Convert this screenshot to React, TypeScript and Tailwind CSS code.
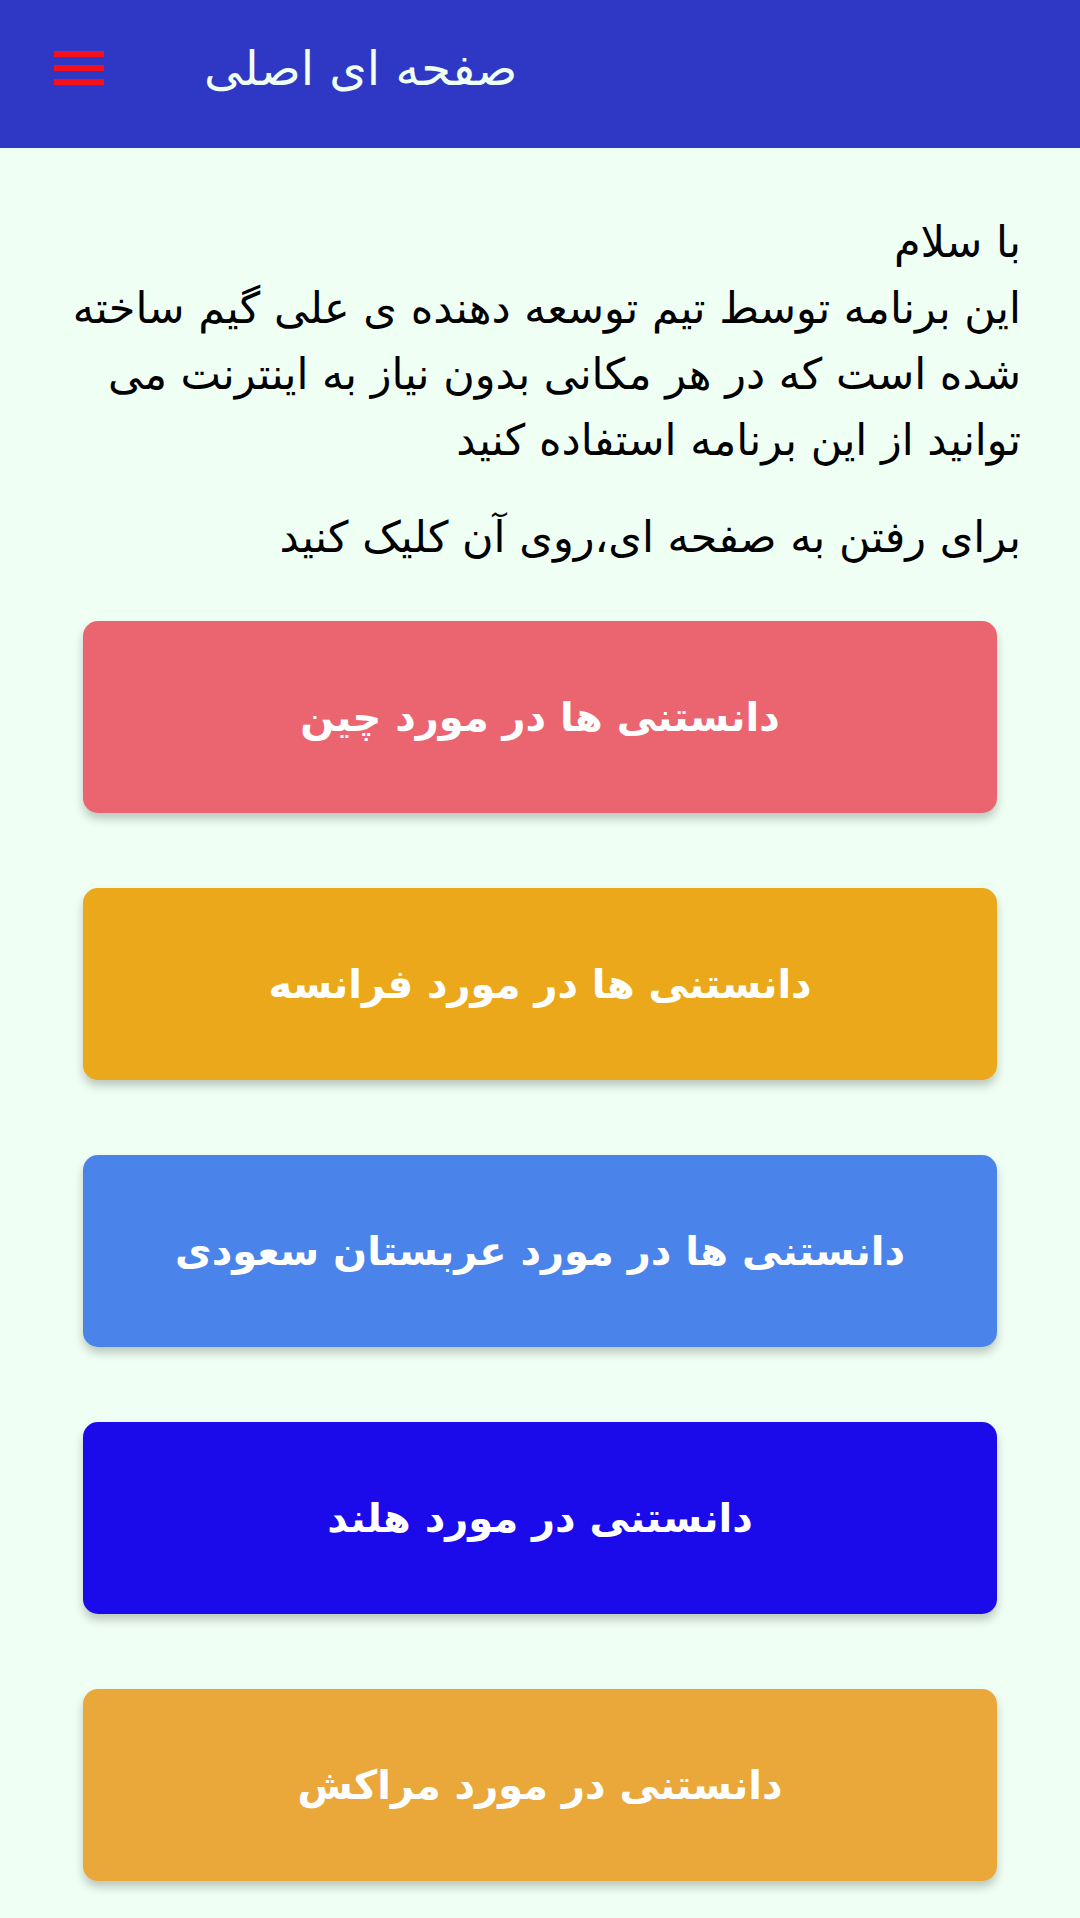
const buttons = [
  { label: 'دانستنی ها در مورد چین', color: 'bg-[#eb6570]' },
  { label: 'دانستنی ها در مورد فرانسه', color: 'bg-[#eaa81a]' },
  { label: 'دانستنی ها در مورد عربستان سعودی', color: 'bg-[#4a84eb]' },
  { label: 'دانستنی در مورد هلند', color: 'bg-[#1b0aea]' },
  { label: 'دانستنی در مورد مراکش', color: 'bg-[#eaa73a]' },
]

const intro = [
  'با سلام',
  'این برنامه توسط تیم توسعه دهنده ی علی گیم ساخته',
  'شده است که در هر مکانی بدون نیاز به اینترنت می',
  'توانید از این برنامه استفاده کنید',
]

export default function App() {
  return (
    <div className="min-h-[1918px] w-[1080px] bg-[#f0fff4] font-['DejaVu_Sans',sans-serif]">
      {/* toolbar */}
      <header className="flex h-[148px] items-center bg-[#2e38c5] pb-[12px]">
        <div className="ml-[54px] flex w-[50px] flex-col gap-[8px]">
          <span className="h-[6px] bg-[#f5101c]" />
          <span className="h-[6px] bg-[#f5101c]" />
          <span className="h-[6px] bg-[#f5101c]" />
        </div>
        <h1 dir="rtl" className="ml-[100px] text-[48px] leading-none text-[#f0fff4]">صفحه ای اصلی</h1>
      </header>

      <main className="px-[59px] pt-[61px]">
        <div dir="rtl" className="text-right text-[43px] leading-[66px] text-black">
          {intro.map(line => (
            <div key={line} className="whitespace-nowrap">{line}</div>
          ))}
          <p className="mt-[31px] whitespace-nowrap">برای رفتن به صفحه ای،روی آن کلیک کنید</p>
        </div>

        <div className="mt-[51px] flex flex-col gap-[75px] px-[24px]">
          {buttons.map(b => (
            <button
              key={b.label}
              dir="rtl"
              className={`${b.color} flex h-[192px] w-full items-center justify-center rounded-[15px] text-[40px] font-bold text-white shadow-[0_6px_10px_rgba(0,0,0,0.22)]`}
            >
              {b.label}
            </button>
          ))}
        </div>
      </main>
    </div>
  )
}
